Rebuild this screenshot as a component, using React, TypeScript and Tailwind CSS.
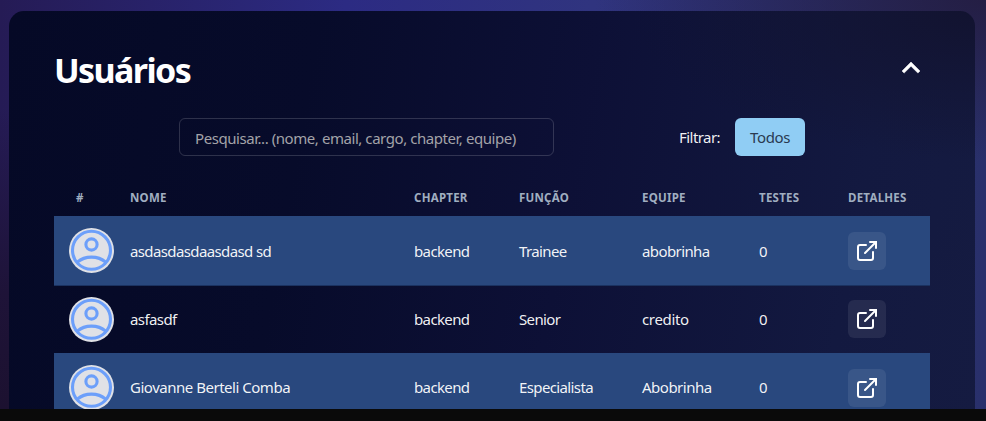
import React from "react";

type User = { name: string; nameTracking: string; chapter: string; role: string; team: string; teamTracking: string; tests: number };

const users: User[] = [
  { name: "asdasdasdaasdasd sd", nameTracking: "tracking-[-0.62px]", chapter: "backend", role: "Trainee", team: "abobrinha", teamTracking: "tracking-[-0.6px]", tests: 0 },
  { name: "asfasdf", nameTracking: "tracking-[-0.58px]", chapter: "backend", role: "Senior", team: "credito", teamTracking: "tracking-[-0.35px]", tests: 0 },
  { name: "Giovanne Berteli Comba", nameTracking: "tracking-[-0.48px]", chapter: "backend", role: "Especialista", team: "Abobrinha", teamTracking: "tracking-[-0.5px]", tests: 0 },
];

const columns = "grid grid-cols-[61px_284px_105px_123px_117px_89px_97px]";

function Avatar() {
  return (
    <svg viewBox="0 0 45 45" className="block size-[45px]" fill="none" stroke="#6c9ffa" strokeWidth="3.1">
      <circle cx="22.5" cy="22.5" r="22.5" fill="#e0e1e6" stroke="none" />
      <circle cx="22.5" cy="22.3" r="19" />
      <circle cx="22.5" cy="16.5" r="5.6" />
      <path d="M8.3 34.2C16 27.4 29 27.4 36.7 34.2" />
    </svg>
  );
}

function ExternalLink() {
  return (
    <svg viewBox="0 0 24 24" className="size-6" fill="none" stroke="currentColor" strokeWidth="2" strokeLinecap="round">
      <path d="M15 3h6v6" />
      <path d="M10 14L21 3" />
      <path d="M18 13v6a2 2 0 0 1-2 2H5a2 2 0 0 1-2-2V8a2 2 0 0 1 2-2h6" />
    </svg>
  );
}

function Row({ user, index }: { user: User; index: number }) {
  const striped = index % 2 === 0;
  const shade = striped ? "h-[69px] bg-[#29487e]" : "h-[68px] border-t border-[#1b3260]";
  const text = index === 0 ? "pt-[23px] pl-[15px]" : index === 1 ? "pt-[21px] pl-[15px]" : "pt-[22px] pl-[15px]";
  return (
    <div className={`${columns} ${shade} text-[15px] leading-6 tracking-[-0.62px] text-white/95`}>
      <div className={striped ? "pt-3 pl-[15px]" : "pt-[11px] pl-[15px]"}><Avatar /></div>
      <div className={`${text} ${user.nameTracking} whitespace-nowrap`}>{user.name}</div>
      <div className={text}>{user.chapter}</div>
      <div className={text}>{user.role}</div>
      <div className={`${text} ${user.teamTracking}`}>{user.team}</div>
      <div className={text}>{user.tests}</div>
      <div className={striped ? "pt-[15.5px] pl-[15px]" : "pt-[14px] pl-[15px]"}>
        <button className="flex size-[38px] items-center justify-center rounded-md bg-white/8 text-white">
          <ExternalLink />
        </button>
      </div>
    </div>
  );
}

export default function App() {
  return (
    <div className="flex h-[421px] w-[986px] flex-col overflow-hidden bg-[#0a0a0a] font-['Noto_Sans','Segoe_UI',sans-serif]">
      <div className="h-[409px] overflow-hidden bg-[radial-gradient(ellipse_at_0%_100%,#1c1130_0%,#1e1338_20%,transparent_52%),radial-gradient(ellipse_at_100%_0%,#241e44_0%,transparent_28%),linear-gradient(90deg,#251b55_0%,#2c2b83_35%,#30347f_60%,#29306b_100%)] px-[9px] pt-[10.5px] pr-[11px]">
        <main className="h-[420px] rounded-t-[15px] bg-[radial-gradient(ellipse_at_100%_0%,#121330_0%,transparent_25%),linear-gradient(100deg,#050926_0%,#070b2a_30%,#0d1036_57%,#131940_85%,#151b41_100%)] px-[45px]">
          <header className="flex h-[107.5px] justify-between pr-[1px]">
            <h1 className="pt-[34px] text-[34px] leading-[50px] font-bold tracking-[-1.6px] text-white">Usuários</h1>
            <svg viewBox="0 0 24 24" className="mt-[39.5px] size-9 text-white" fill="currentColor" stroke="currentColor" strokeWidth="0.35">
              <path d="M12 8l-6 6 1.41 1.41L12 10.83l4.59 4.58L18 14z" />
            </svg>
          </header>
          <div className="flex h-[61px] pl-[125px]">
            <div className="h-[38px] w-[375px] rounded-md border border-white/16 px-[15px] pt-[7px] text-[15px] leading-6 tracking-[-0.44px] text-[#a3a3a8]">
              Pesquisar... (nome, email, cargo, chapter, equipe)
            </div>
            <span className="ml-[125px] w-14 pt-[7px] text-[15px] leading-6 tracking-[-0.55px] text-white/95">Filtrar:</span>
            <button className="h-[38px] w-[70px] rounded-md bg-[#90cdf4] text-[15px] leading-6 tracking-[-0.4px] text-[#2a3a50]">Todos</button>
          </div>
          <section>
            <div className={`${columns} h-[37px] pt-[9px] text-[11.5px] leading-5 font-bold tracking-[0.25px] text-[#a0aec0]`}>
              <span className="pl-[22px]">#</span>
              <span className="pl-[15px]">NOME</span>
              <span className="pl-[15px]">CHAPTER</span>
              <span className="pl-[15px]">FUNÇÃO</span>
              <span className="pl-[15px]">EQUIPE</span>
              <span className="pl-[15px]">TESTES</span>
              <span className="pl-[15px]">DETALHES</span>
            </div>
            {users.map((user, index) => <Row key={user.name} user={user} index={index} />)}
          </section>
        </main>
      </div>
    </div>
  );
}
